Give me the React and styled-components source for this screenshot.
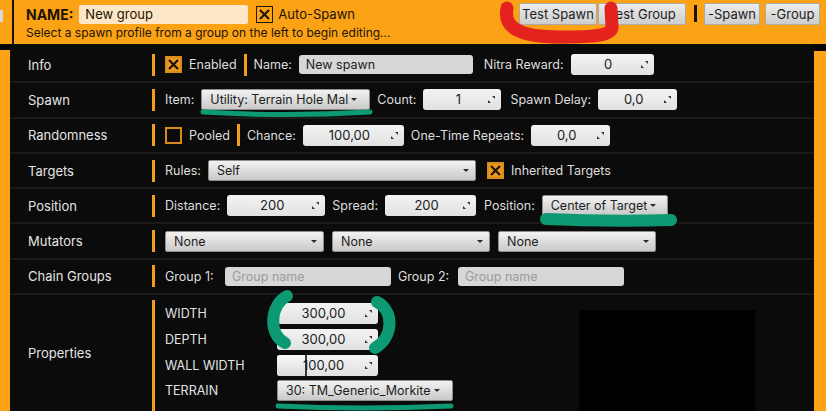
import React from "react";
import styled, { createGlobalStyle } from "styled-components";

const ORANGE = "#fba314";

const GlobalStyle = createGlobalStyle`
  html, body {
    margin: 0;
    padding: 0;
    background: #000;
  }
  body {
    font-family: Inter, "Noto Sans", sans-serif;
  }
`;

const Page = styled.div`
  position: relative;
  width: 826px;
  height: 411px;
  overflow: hidden;
  background: #060606;
`;

/* ---------- header ---------- */

const Header = styled.div`
  display: flex;
  height: 44px;
  background: ${ORANGE};
`;

const HeaderStub = styled.div`
  width: 12px;
  padding-top: 10px;
  box-sizing: border-box;
`;

const StubButton = styled.div`
  width: 3px;
  height: 12px;
  background: #d8d8d8;
`;

const HeaderRule = styled.div`
  width: 2px;
  background: #1c1204;
`;

const HeaderMain = styled.div`
  flex: 1;
  display: flex;
  flex-direction: column;
  padding: 4px 0 0 12px;
  color: #1b1203;
`;

const NameLine = styled.div`
  display: flex;
  align-items: center;
  height: 20px;
`;

const NameLabel = styled.span`
  font-size: 14px;
  font-weight: 700;
  margin-right: 6px;
`;

const NameInput = styled.div`
  width: 169px;
  height: 19px;
  background: #fde7c6;
  border-radius: 2px;
  font-size: 13px;
  line-height: 19px;
  padding-left: 6px;
  box-sizing: border-box;
  margin-right: 8px;
`;

const AutoLabel = styled.span`
  font-size: 13px;
  margin-left: 5px;
`;

const Hint = styled.div`
  font-size: 12px;
  margin-top: 1px;
`;

const HeaderButtons = styled.div`
  display: flex;
  align-items: flex-start;
  padding: 3px 6px 0 0;
`;

const ToolButton = styled.div`
  height: 22px;
  width: ${(p) => p.$w}px;
  margin-left: ${(p) => p.$gap || 0}px;
  box-sizing: border-box;
  border: 1px solid #a9a9a9;
  border-radius: 2px;
  background: linear-gradient(#ececec, #cdcdcd);
  color: #1e1e1e;
  font-size: 13px;
  line-height: 20px;
  text-align: center;
`;

const ButtonRule = styled.div`
  width: 3px;
  height: 17px;
  margin: 2px 0 0 8px;
  background: #1c1204;
`;

/* ---------- body ---------- */

const Body = styled.div`
  display: flex;
  height: 367px;
`;

const Rail = styled.div`
  width: ${(p) => p.$w}px;
  margin-top: ${(p) => p.$top}px;
  background: ${ORANGE};
`;

const Panel = styled.div`
  flex: 1;
  display: flex;
  flex-direction: column;
  padding-top: 4px;
  background: #0b0b0b;
`;

const Row = styled.div`
  display: flex;
  align-items: ${(p) => (p.$tall ? "stretch" : "center")};
  height: ${(p) => (p.$tall ? "auto" : "33.3px")};
  flex: ${(p) => (p.$tall ? 1 : "none")};
  border-bottom: ${(p) => (p.$tall ? "none" : "2px solid #1b1b1b")};
  color: #dedede;
  font-size: 12.5px;
`;

const RowLabel = styled.div`
  width: 142px;
  padding-left: 18px;
  box-sizing: border-box;
  font-size: 13px;
  color: #e4e4e4;
  align-self: center;
`;

const Bar = styled.div`
  width: 3px;
  height: ${(p) => (p.$tall ? "auto" : "22px")};
  margin-top: ${(p) => (p.$tall ? "5px" : 0)};
  background: #f29d1c;
  flex: none;
`;

const Content = styled.div`
  display: flex;
  align-items: center;
  gap: ${(p) => p.$gap || 7}px;
  margin-left: 10px;
`;

const Text = styled.span`
  white-space: nowrap;
  margin-left: ${(p) => p.$ml || 0}px;
  min-width: ${(p) => (p.$w ? `${p.$w}px` : "auto")};
`;

const TextInput = styled.div`
  width: ${(p) => p.$w}px;
  height: 19px;
  background: #d7d7d7;
  border-radius: 3px;
  padding-left: 7px;
  box-sizing: border-box;
  font-size: 12.5px;
  line-height: 19px;
  color: ${(p) => (p.$placeholder ? "#9b9b9b" : "#222")};
`;

const NumBox = styled.div`
  position: relative;
  width: ${(p) => p.$w}px;
  height: 21px;
  background: linear-gradient(#f3f3f3, #e1e1e1);
  border-radius: 3px;
  box-sizing: border-box;
  padding-right: 8px;
  text-align: center;
  font-size: 13px;
  line-height: 21px;
  color: #202020;
  overflow: hidden;
`;

const NumFill = styled.div`
  position: absolute;
  left: 0;
  top: 0;
  bottom: 0;
  width: ${(p) => p.$w}px;
  background: linear-gradient(#fbfbfb, #d9d9d9);
  border-right: 2px solid #3a3a3a;
`;

const NumValue = styled.span`
  position: relative;
`;

const DragMark = styled.svg`
  position: absolute;
  right: 6px;
  top: 7px;
`;

const Select = styled.div`
  display: flex;
  align-items: center;
  width: ${(p) => p.$w}px;
  height: 21px;
  box-sizing: border-box;
  padding: 0 6px 0 8px;
  border: 1px solid #8e8e8e;
  border-radius: 2px;
  background: linear-gradient(#f2f2f2, #c9c9c9);
  color: #1e1e1e;
  font-size: 12.5px;
`;

const SelectText = styled.span`
  flex: ${(p) => (p.$fit ? "none" : 1)};
  white-space: nowrap;
  overflow: hidden;
`;

const Caret = styled.span`
  width: 0;
  height: 0;
  margin-left: 3px;
  border-left: 3px solid transparent;
  border-right: 3px solid transparent;
  border-top: 3px solid #2a2a2a;
`;

const Box = styled.div`
  width: 17px;
  height: 17px;
  box-sizing: border-box;
  display: flex;
  align-items: center;
  justify-content: center;
  margin-left: ${(p) => p.$ml || 0}px;
  border: ${(p) => (p.$dark ? "1.5px solid #20170a" : "2px solid #d98c1a")};
  background: ${(p) =>
    p.$dark ? "transparent" : p.$checked ? "#eb9a1e" : "#0b0b0b"};
`;

const PropsArea = styled.div`
  display: flex;
  margin-left: 10px;
`;

const PropGrid = styled.div`
  display: grid;
  grid-template-columns: 112px auto;
  grid-auto-rows: 25.6px;
  align-items: center;
  padding-top: 6px;
  font-size: 12.5px;
  color: #e2e2e2;
`;

const Preview = styled.div`
  width: 176px;
  height: 101px;
  margin: 15px 0 0 126px;
  background: #000;
`;

const Ink = styled.svg`
  position: absolute;
  left: 0;
  top: 0;
  pointer-events: none;
`;

/* ---------- small parts ---------- */

function Check({ checked, dark, ml }) {
  return (
    <Box $checked={checked} $dark={dark} $ml={ml}>
      {checked && (
        <svg width="11" height="11" viewBox="0 0 11 11">
          <path
            d="M1 1 L10 10 M10 1 L1 10"
            stroke={dark ? "#20170a" : "#1a1006"}
            strokeWidth="2.2"
          />
        </svg>
      )}
    </Box>
  );
}

function NumberField({ w, value, fill }) {
  return (
    <NumBox $w={w}>
      {fill && <NumFill $w={fill} />}
      <NumValue>{value}</NumValue>
      <DragMark width="7" height="7" viewBox="0 0 7 7">
        <path d="M4 0 H7 V3 Z" fill="#333" />
        <path d="M0 4 V7 H3 Z" fill="#333" />
      </DragMark>
    </NumBox>
  );
}

function Dropdown({ w, children, fit }) {
  return (
    <Select $w={w}>
      <SelectText $fit={fit}>{children}</SelectText>
      <Caret />
    </Select>
  );
}

export default function App() {
  return (
    <>
      <GlobalStyle />
      <Page>
        <Header>
          <HeaderStub>
            <StubButton />
          </HeaderStub>
          <HeaderRule />
          <HeaderMain>
            <NameLine>
              <NameLabel>NAME:</NameLabel>
              <NameInput>New group</NameInput>
              <Check checked dark />
              <AutoLabel>Auto-Spawn</AutoLabel>
            </NameLine>
            <Hint>Select a spawn profile from a group on the left to begin editing...</Hint>
          </HeaderMain>
          <HeaderButtons>
            <ToolButton $w={78}>Test Spawn</ToolButton>
            <ToolButton $w={88} $gap={1}>Test Group</ToolButton>
            <ButtonRule />
            <ToolButton $w={56} $gap={7}>-Spawn</ToolButton>
            <ToolButton $w={55} $gap={5}>-Group</ToolButton>
          </HeaderButtons>
        </Header>

        <Body>
          <Rail $w={10} $top={6} />
          <Panel>
            <Row>
              <RowLabel>Info</RowLabel>
              <Bar />
              <Content>
                <Check checked />
                <Text>Enabled</Text>
                <Bar />
                <Text>Name:</Text>
                <TextInput $w={174}>New spawn</TextInput>
                <Text $ml={4}>Nitra Reward:</Text>
                <NumberField w={83} value="0" />
              </Content>
            </Row>

            <Row>
              <RowLabel>Spawn</RowLabel>
              <Bar />
              <Content>
                <Text>Item:</Text>
                <Dropdown w={169} fit>Utility: Terrain Hole Mal</Dropdown>
                <Text>Count:</Text>
                <NumberField w={78} value="1" />
                <Text $ml={2}>Spawn Delay:</Text>
                <NumberField w={79} value="0,0" />
              </Content>
            </Row>

            <Row>
              <RowLabel>Randomness</RowLabel>
              <Bar />
              <Content>
                <Check />
                <Text>Pooled</Text>
                <Bar />
                <Text>Chance:</Text>
                <NumberField w={101} value="100,00" />
                <Text>One-Time Repeats:</Text>
                <NumberField w={79} value="0,0" />
              </Content>
            </Row>

            <Row>
              <RowLabel>Targets</RowLabel>
              <Bar />
              <Content>
                <Text>Rules:</Text>
                <Dropdown w={268}>Self</Dropdown>
                <Check checked ml={4} />
                <Text>Inherited Targets</Text>
              </Content>
            </Row>

            <Row>
              <RowLabel>Position</RowLabel>
              <Bar />
              <Content>
                <Text>Distance:</Text>
                <NumberField w={98} value="200" />
                <Text>Spread:</Text>
                <NumberField w={91} value="200" />
                <Text $ml={1}>Position:</Text>
                <Dropdown w={126} fit>Center of Target</Dropdown>
              </Content>
            </Row>

            <Row>
              <RowLabel>Mutators</RowLabel>
              <Bar />
              <Content $gap={8}>
                <Dropdown w={159}>None</Dropdown>
                <Dropdown w={158}>None</Dropdown>
                <Dropdown w={158}>None</Dropdown>
              </Content>
            </Row>

            <Row>
              <RowLabel>Chain Groups</RowLabel>
              <Bar />
              <Content>
                <Text $w={53}>Group 1:</Text>
                <TextInput $w={166} $placeholder>Group name</TextInput>
                <Text $w={53}>Group 2:</Text>
                <TextInput $w={166} $placeholder>Group name</TextInput>
              </Content>
            </Row>

            <Row $tall>
              <RowLabel>Properties</RowLabel>
              <Bar $tall />
              <PropsArea>
                <PropGrid>
                  <span>WIDTH</span>
                  <NumberField w={101} value="300,00" />
                  <span>DEPTH</span>
                  <NumberField w={101} value="300,00" />
                  <span>WALL WIDTH</span>
                  <NumberField w={101} value="100,00" fill={28} />
                  <span>TERRAIN</span>
                  <Dropdown w={176} fit>30: TM_Generic_Morkite</Dropdown>
                </PropGrid>
                <Preview />
              </PropsArea>
            </Row>
          </Panel>
          <Rail $w={12} $top={7} />
        </Body>

        <Ink width="826" height="411" viewBox="0 0 826 411">
          <path
            d="M507 8 C503 28 520 37 560 37 C592 37 612 36 612 27 L611 8"
            fill="none"
            stroke="#e4221e"
            strokeWidth="13"
            strokeLinecap="round"
            strokeLinejoin="round"
          />
          <g fill="none" stroke="#0d9a72" strokeLinecap="round">
            <path d="M203 112 Q285 117 370 112" strokeWidth="5" />
            <path d="M546 219 Q610 222 671 220" strokeWidth="12" />
            <path d="M287 296 C270 305 268 334 285 343" strokeWidth="12" />
            <path d="M377 302 C394 310 394 337 375 348" strokeWidth="12" />
            <path d="M278 406 Q360 410 451 406" strokeWidth="5" />
          </g>
        </Ink>
      </Page>
    </>
  );
}
